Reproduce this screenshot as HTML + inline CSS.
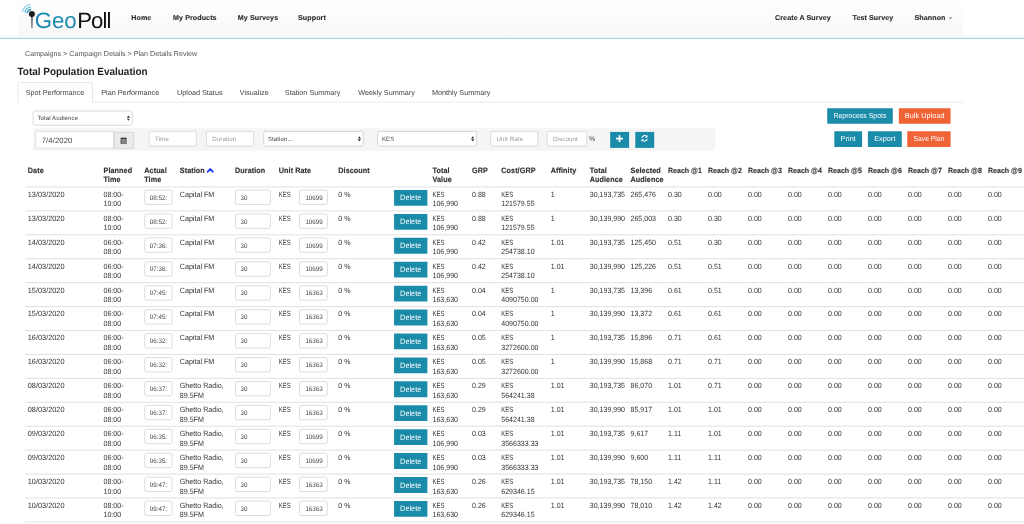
<!DOCTYPE html>
<html><head><meta charset="utf-8"><title>GeoPoll - Total Population Evaluation</title><style>
html,body{margin:0;padding:0;background:#fff;}
body{width:1024px;height:524px;overflow:hidden;position:relative;font-family:"Liberation Sans",sans-serif;}
#w{position:absolute;left:0;top:0;width:1024px;height:524px;will-change:transform;}
#bg{position:absolute;left:0;top:0;width:1024px;height:524px;font-family:"Liberation Sans",sans-serif;}
#bg text{text-rendering:geometricPrecision;white-space:pre;}
</style></head><body><div id="w">
<svg id="bg" width="1024" height="524" viewBox="0 0 1024 524">
<defs><linearGradient id="ng" x1="0" y1="0" x2="0" y2="1"><stop offset="0" stop-color="#ffffff"/><stop offset="1" stop-color="#f7f7f7"/></linearGradient></defs>
<rect x="18.00" y="0.00" width="945.25" height="37.50" fill="url(#ng)"/>
<rect x="0.00" y="37.80" width="1024.00" height="0.90" fill="#8ac5d5"/>
<path d="M27.09 13.12 A4.9 4.9 0 0 1 31.22 9.20" fill="none" stroke="#3a9fc1" stroke-width="1.5"/>
<path d="M24.73 12.66 A7.3 7.3 0 0 1 30.88 6.82" fill="none" stroke="#6fbdd9" stroke-width="1.35"/>
<path d="M22.28 12.18 A9.8 9.8 0 0 1 30.54 4.35" fill="none" stroke="#9bd3e9" stroke-width="1.2"/>
<defs><linearGradient id="st" x1="0" y1="0" x2="0" y2="1"><stop offset="0" stop-color="#444"/><stop offset="1" stop-color="#999"/></linearGradient></defs>
<rect x="31.15" y="15" width="1.6" height="13.4" fill="url(#st)"/>
<circle cx="31.9" cy="14.05" r="3.0" fill="#1c1c1c"/>
<text x="34.80" y="28.10" font-size="22.2" fill="#1b8ab0" letter-spacing="-0.1">Geo</text>
<text x="77.20" y="28.10" font-size="22.2" fill="#111" letter-spacing="-0.9">Poll</text>
<text x="131.25" y="20.10" font-size="7.1" fill="#2a2a2a" font-weight="bold" letter-spacing="0.1" stroke="#2a2a2a" stroke-width="0.12">Home</text>
<text x="173.00" y="20.10" font-size="7.1" fill="#2a2a2a" font-weight="bold" letter-spacing="0.1" stroke="#2a2a2a" stroke-width="0.12">My Products</text>
<text x="237.75" y="20.10" font-size="7.1" fill="#2a2a2a" font-weight="bold" letter-spacing="0.1" stroke="#2a2a2a" stroke-width="0.12">My Surveys</text>
<text x="298.00" y="20.10" font-size="7.1" fill="#2a2a2a" font-weight="bold" letter-spacing="0.1" stroke="#2a2a2a" stroke-width="0.12">Support</text>
<text x="775.00" y="20.10" font-size="7.1" fill="#2a2a2a" font-weight="bold" letter-spacing="0.1" stroke="#2a2a2a" stroke-width="0.12">Create A Survey</text>
<text x="852.50" y="20.10" font-size="7.1" fill="#2a2a2a" font-weight="bold" letter-spacing="0.1" stroke="#2a2a2a" stroke-width="0.12">Test Survey</text>
<text x="914.50" y="20.10" font-size="7.1" fill="#2a2a2a" font-weight="bold" letter-spacing="0.1" stroke="#2a2a2a" stroke-width="0.12">Shannon</text>
<path d="M948.8 17.3 h3.4 l-1.7 1.9 z" fill="#888"/>
<text x="25.00" y="56.00" font-size="7.15" fill="#555">Campaigns &gt; Campaign Details &gt; Plan Details Review</text>
<text x="17.50" y="75.00" font-size="9.95" fill="#222" font-weight="bold" transform="translate(0,75.00) scale(1,1.06) translate(0,-75.00)">Total Population Evaluation</text>
<rect x="18.00" y="101.85" width="945.25" height="0.60" fill="#ddd"/>
<rect x="18.30" y="90.00" width="73.90" height="13.00" fill="#fff"/>
<path d="M18 102.4 V84 a1.5 1.5 0 0 1 1.5 -1.5 H91 a1.5 1.5 0 0 1 1.5 1.5 V102.4" fill="none" stroke="#d8d8d8" stroke-width="0.6"/>
<text x="25.75" y="95.00" font-size="7.25" fill="#444">Spot Performance</text>
<text x="101.25" y="95.00" font-size="7.25" fill="#444">Plan Performance</text>
<text x="177.00" y="95.00" font-size="7.25" fill="#444">Upload Status</text>
<text x="239.80" y="95.00" font-size="7.25" fill="#444">Visualize</text>
<text x="284.80" y="95.00" font-size="7.25" fill="#444">Station Summary</text>
<text x="358.20" y="95.00" font-size="7.25" fill="#444">Weekly Summary</text>
<text x="431.90" y="95.00" font-size="7.25" fill="#444">Monthly Summary</text>
<rect x="33.20" y="111.00" width="99.10" height="14.20" fill="#fff" stroke="#c6c6c6" stroke-width="0.68" rx="1.8"/>
<text x="37.40" y="120.28" font-size="6.05" fill="#444" letter-spacing="0.1">Total Audience</text>
<path transform="translate(126.85,115.55)" d="M0 2.2 L1.55 0 L3.1 2.2 Z M0 3.1 L1.55 5.3 L3.1 3.1 Z" fill="#333"/>
<rect x="33.00" y="128.25" width="682.50" height="22.50" fill="#f5f5f5"/>
<path d="M113.7 131.4 H37.5 a1.8 1.8 0 0 0 -1.8 1.8 V146.3 a1.8 1.8 0 0 0 1.8 1.8 H113.7 Z" fill="#fff" stroke="#ccc" stroke-width="0.6"/>
<text x="41.70" y="142.52" font-size="7.7" fill="#444" letter-spacing="0.1">7/4/2020</text>
<rect x="114.20" y="132.20" width="19.60" height="16.40" fill="#eaeaea" stroke="#c8c8c8" stroke-width="0.6" rx="0.6"/>
<g transform="translate(120.15,137.1) scale(0.1015,0.0945)">
<path fill="#333" d="M4 9h60v61H4z M15 0h9v14H15z M44 0h9v14H44z"/>
<path stroke="#eaeaea" stroke-width="4" d="M4 24h60 M4 39h60 M4 54h60 M19 24v46 M34 24v46 M49 24v46"/>
</g>
<rect x="149.20" y="131.40" width="47.10" height="14.70" fill="#fff" stroke="#ccc" stroke-width="0.68" rx="1.8"/>
<text x="155.00" y="140.98" font-size="6.2" fill="#999" letter-spacing="0.1">Time</text>
<rect x="206.40" y="131.40" width="47.20" height="14.70" fill="#fff" stroke="#ccc" stroke-width="0.68" rx="1.8"/>
<text x="212.20" y="140.98" font-size="6.2" fill="#999" letter-spacing="0.1">Duration</text>
<rect x="263.70" y="131.40" width="99.60" height="14.70" fill="#fff" stroke="#c6c6c6" stroke-width="0.68" rx="1.8"/>
<text x="267.90" y="140.93" font-size="6.05" fill="#444" letter-spacing="0.1">Station...</text>
<path transform="translate(357.85,136.20)" d="M0 2.2 L1.55 0 L3.1 2.2 Z M0 3.1 L1.55 5.3 L3.1 3.1 Z" fill="#333"/>
<rect x="377.70" y="131.40" width="98.90" height="14.70" fill="#fff" stroke="#c6c6c6" stroke-width="0.68" rx="1.8"/>
<text x="381.90" y="140.93" font-size="6.05" fill="#444" letter-spacing="0.1">KES</text>
<path transform="translate(471.15,136.20)" d="M0 2.2 L1.55 0 L3.1 2.2 Z M0 3.1 L1.55 5.3 L3.1 3.1 Z" fill="#333"/>
<rect x="490.70" y="131.40" width="47.10" height="14.70" fill="#fff" stroke="#ccc" stroke-width="0.68" rx="1.8"/>
<text x="496.50" y="140.98" font-size="6.2" fill="#999" letter-spacing="0.1">Unit Rate</text>
<rect x="547.20" y="131.40" width="39.60" height="14.70" fill="#fff" stroke="#ccc" stroke-width="0.68" rx="1.8"/>
<text x="553.00" y="140.98" font-size="6.2" fill="#999" letter-spacing="0.1">Discount</text>
<text x="589.00" y="141.10" font-size="6.9" fill="#333">%</text>
<rect x="610.20" y="131.90" width="18.90" height="16.00" fill="#1a8ca9"/>
<path d="M619.5 135.3v6.8M616.0 138.7h7.0" stroke="#fff" stroke-width="1.75"/>
<rect x="635.30" y="131.90" width="18.90" height="16.00" fill="#1a8ca9"/>
<g transform="translate(640.9,134.7) scale(0.111)">
<g fill="none" stroke="#fff" stroke-width="9.5"><path d="M9 29 A25 25 0 0 1 51 15"/><path d="M57 37 A25 25 0 0 1 15 51"/></g>
<path fill="#fff" d="M60 2v24H36z M6 64V40h24z"/></g>
<rect x="827.20" y="108.20" width="65.60" height="15.55" fill="#1a8ca9" rx="0.4"/>
<text x="860.00" y="118.27" font-size="7.3" fill="#fff" text-anchor="middle" textLength="53.1" lengthAdjust="spacingAndGlyphs">Reprocess Spots</text>
<rect x="898.80" y="108.20" width="51.80" height="15.55" fill="#ef6337" rx="0.4"/>
<text x="924.70" y="118.27" font-size="7.3" fill="#fff" letter-spacing="0.05" text-anchor="middle">Bulk Upload</text>
<rect x="834.30" y="131.25" width="27.80" height="15.75" fill="#1a8ca9" rx="0.4"/>
<text x="848.20" y="141.42" font-size="7.3" fill="#fff" letter-spacing="0.05" text-anchor="middle">Print</text>
<rect x="867.90" y="131.25" width="33.90" height="15.75" fill="#1a8ca9" rx="0.4"/>
<text x="884.85" y="141.42" font-size="7.3" fill="#fff" letter-spacing="0.05" text-anchor="middle">Export</text>
<rect x="907.25" y="131.25" width="43.35" height="15.75" fill="#ef6337" rx="0.4"/>
<text x="928.92" y="141.42" font-size="7.3" fill="#fff" text-anchor="middle" textLength="30.6" lengthAdjust="spacingAndGlyphs">Save Plan</text>
<text x="27.75" y="173.00" font-size="7.2" fill="#333" font-weight="bold" letter-spacing="0.1" stroke="#333" stroke-width="0.15" transform="translate(0,173.00) scale(1,1.07) translate(0,-173.00)">Date</text>
<text x="103.50" y="173.00" font-size="7.2" fill="#333" font-weight="bold" letter-spacing="0.1" stroke="#333" stroke-width="0.15" transform="translate(0,173.00) scale(1,1.07) translate(0,-173.00)">Planned</text>
<text x="103.50" y="181.90" font-size="7.2" fill="#333" font-weight="bold" letter-spacing="0.1" stroke="#333" stroke-width="0.15" transform="translate(0,181.90) scale(1,1.07) translate(0,-181.90)">Time</text>
<text x="144.25" y="173.00" font-size="7.2" fill="#333" font-weight="bold" letter-spacing="0.1" stroke="#333" stroke-width="0.15" transform="translate(0,173.00) scale(1,1.07) translate(0,-173.00)">Actual</text>
<text x="144.25" y="181.90" font-size="7.2" fill="#333" font-weight="bold" letter-spacing="0.1" stroke="#333" stroke-width="0.15" transform="translate(0,181.90) scale(1,1.07) translate(0,-181.90)">Time</text>
<text x="179.75" y="173.00" font-size="7.2" fill="#333" font-weight="bold" letter-spacing="0.1" stroke="#333" stroke-width="0.15" transform="translate(0,173.00) scale(1,1.07) translate(0,-173.00)">Station</text>
<text x="235.00" y="173.00" font-size="7.2" fill="#333" font-weight="bold" letter-spacing="0.1" stroke="#333" stroke-width="0.15" transform="translate(0,173.00) scale(1,1.07) translate(0,-173.00)">Duration</text>
<text x="278.75" y="173.00" font-size="7.2" fill="#333" font-weight="bold" letter-spacing="0.1" stroke="#333" stroke-width="0.15" transform="translate(0,173.00) scale(1,1.07) translate(0,-173.00)">Unit Rate</text>
<text x="338.25" y="173.00" font-size="7.2" fill="#333" font-weight="bold" letter-spacing="0.1" stroke="#333" stroke-width="0.15" transform="translate(0,173.00) scale(1,1.07) translate(0,-173.00)">Discount</text>
<text x="432.50" y="173.00" font-size="7.2" fill="#333" font-weight="bold" letter-spacing="0.1" stroke="#333" stroke-width="0.15" transform="translate(0,173.00) scale(1,1.07) translate(0,-173.00)">Total</text>
<text x="432.50" y="181.90" font-size="7.2" fill="#333" font-weight="bold" letter-spacing="0.1" stroke="#333" stroke-width="0.15" transform="translate(0,181.90) scale(1,1.07) translate(0,-181.90)">Value</text>
<text x="472.00" y="173.00" font-size="7.2" fill="#333" font-weight="bold" letter-spacing="0.1" stroke="#333" stroke-width="0.15" transform="translate(0,173.00) scale(1,1.07) translate(0,-173.00)">GRP</text>
<text x="501.25" y="173.00" font-size="7.2" fill="#333" font-weight="bold" letter-spacing="0.1" stroke="#333" stroke-width="0.15" transform="translate(0,173.00) scale(1,1.07) translate(0,-173.00)">Cost/GRP</text>
<text x="550.75" y="173.00" font-size="7.2" fill="#333" font-weight="bold" letter-spacing="0.1" stroke="#333" stroke-width="0.15" transform="translate(0,173.00) scale(1,1.07) translate(0,-173.00)">Affinity</text>
<text x="589.75" y="173.00" font-size="7.2" fill="#333" font-weight="bold" letter-spacing="0.1" stroke="#333" stroke-width="0.15" transform="translate(0,173.00) scale(1,1.07) translate(0,-173.00)">Total</text>
<text x="589.75" y="181.90" font-size="7.2" fill="#333" font-weight="bold" letter-spacing="0.1" stroke="#333" stroke-width="0.15" transform="translate(0,181.90) scale(1,1.07) translate(0,-181.90)">Audience</text>
<text x="630.50" y="173.00" font-size="7.2" fill="#333" font-weight="bold" letter-spacing="0.1" stroke="#333" stroke-width="0.15" transform="translate(0,173.00) scale(1,1.07) translate(0,-173.00)">Selected</text>
<text x="630.50" y="181.90" font-size="7.2" fill="#333" font-weight="bold" letter-spacing="0.1" stroke="#333" stroke-width="0.15" transform="translate(0,181.90) scale(1,1.07) translate(0,-181.90)">Audience</text>
<text x="668.00" y="173.00" font-size="7.05" fill="#333" font-weight="bold" stroke="#333" stroke-width="0.12" transform="translate(0,173.00) scale(1,1.07) translate(0,-173.00)">Reach @1</text>
<text x="708.00" y="173.00" font-size="7.05" fill="#333" font-weight="bold" stroke="#333" stroke-width="0.12" transform="translate(0,173.00) scale(1,1.07) translate(0,-173.00)">Reach @2</text>
<text x="748.00" y="173.00" font-size="7.05" fill="#333" font-weight="bold" stroke="#333" stroke-width="0.12" transform="translate(0,173.00) scale(1,1.07) translate(0,-173.00)">Reach @3</text>
<text x="788.00" y="173.00" font-size="7.05" fill="#333" font-weight="bold" stroke="#333" stroke-width="0.12" transform="translate(0,173.00) scale(1,1.07) translate(0,-173.00)">Reach @4</text>
<text x="828.00" y="173.00" font-size="7.05" fill="#333" font-weight="bold" stroke="#333" stroke-width="0.12" transform="translate(0,173.00) scale(1,1.07) translate(0,-173.00)">Reach @5</text>
<text x="868.00" y="173.00" font-size="7.05" fill="#333" font-weight="bold" stroke="#333" stroke-width="0.12" transform="translate(0,173.00) scale(1,1.07) translate(0,-173.00)">Reach @6</text>
<text x="908.00" y="173.00" font-size="7.05" fill="#333" font-weight="bold" stroke="#333" stroke-width="0.12" transform="translate(0,173.00) scale(1,1.07) translate(0,-173.00)">Reach @7</text>
<text x="948.00" y="173.00" font-size="7.05" fill="#333" font-weight="bold" stroke="#333" stroke-width="0.12" transform="translate(0,173.00) scale(1,1.07) translate(0,-173.00)">Reach @8</text>
<text x="988.00" y="173.00" font-size="7.05" fill="#333" font-weight="bold" stroke="#333" stroke-width="0.12" transform="translate(0,173.00) scale(1,1.07) translate(0,-173.00)">Reach @9</text>
<path transform="translate(206.9,167.7) scale(0.1)" d="M8 40 L33 14 L58 40" fill="none" stroke="#1b38f2" stroke-width="19" stroke-linecap="round" stroke-linejoin="round"/>
<rect x="25.00" y="186.40" width="999.00" height="1.10" fill="#e3e3e3"/>
<rect x="25.00" y="210.32" width="999.00" height="1.10" fill="#e3e3e3"/>
<rect x="25.00" y="234.25" width="999.00" height="1.10" fill="#e3e3e3"/>
<rect x="25.00" y="258.18" width="999.00" height="1.10" fill="#e3e3e3"/>
<rect x="25.00" y="282.10" width="999.00" height="1.10" fill="#e3e3e3"/>
<rect x="25.00" y="306.02" width="999.00" height="1.10" fill="#e3e3e3"/>
<rect x="25.00" y="329.95" width="999.00" height="1.10" fill="#e3e3e3"/>
<rect x="25.00" y="353.87" width="999.00" height="1.10" fill="#e3e3e3"/>
<rect x="25.00" y="377.80" width="999.00" height="1.10" fill="#e3e3e3"/>
<rect x="25.00" y="401.72" width="999.00" height="1.10" fill="#e3e3e3"/>
<rect x="25.00" y="425.65" width="999.00" height="1.10" fill="#e3e3e3"/>
<rect x="25.00" y="449.57" width="999.00" height="1.10" fill="#e3e3e3"/>
<rect x="25.00" y="473.50" width="999.00" height="1.10" fill="#e3e3e3"/>
<rect x="25.00" y="497.43" width="999.00" height="1.10" fill="#e3e3e3"/>
<rect x="25.00" y="521.35" width="999.00" height="1.10" fill="#e3e3e3"/>
<text x="27.75" y="196.80" font-size="7.05" fill="#333" textLength="36.8" lengthAdjust="spacingAndGlyphs" transform="translate(0,196.80) scale(1,1.07) translate(0,-196.80)">13/03/2020</text>
<text x="103.50" y="196.80" font-size="7.05" fill="#333" transform="translate(0,196.80) scale(1,1.07) translate(0,-196.80)">08:00-</text>
<text x="103.50" y="206.40" font-size="7.05" fill="#333" transform="translate(0,206.40) scale(1,1.07) translate(0,-206.40)">10:00</text>
<rect x="144.75" y="190.05" width="27.35" height="14.40" fill="#fff" stroke="#ccc" stroke-width="0.68" rx="1.8"/>
<text x="149.85" y="199.70" font-size="6.2" fill="#444" transform="translate(0,199.70) scale(1,1.07) translate(0,-199.70)">08:52:</text>
<text x="179.75" y="196.80" font-size="7.15" fill="#333" transform="translate(0,196.80) scale(1,1.07) translate(0,-196.80)">Capital FM</text>
<rect x="235.40" y="190.05" width="35.00" height="14.40" fill="#fff" stroke="#ccc" stroke-width="0.68" rx="1.8"/>
<text x="240.60" y="199.70" font-size="6.2" fill="#444" transform="translate(0,199.70) scale(1,1.07) translate(0,-199.70)">30</text>
<text x="278.75" y="196.80" font-size="7.05" fill="#333" textLength="11.9" lengthAdjust="spacingAndGlyphs" transform="translate(0,196.80) scale(1,1.07) translate(0,-196.80)">KES</text>
<rect x="299.40" y="190.05" width="27.90" height="14.40" fill="#fff" stroke="#ccc" stroke-width="0.68" rx="1.8"/>
<text x="305.40" y="199.70" font-size="6.2" fill="#444" transform="translate(0,199.70) scale(1,1.07) translate(0,-199.70)">10699</text>
<text x="338.25" y="196.80" font-size="7.05" fill="#333" transform="translate(0,196.80) scale(1,1.07) translate(0,-196.80)">0 %</text>
<rect x="394.06" y="189.95" width="33.34" height="15.85" fill="#1a8ca9" rx="0.4"/>
<text x="410.73" y="200.45" font-size="7.25" fill="#fff" letter-spacing="0.05" text-anchor="middle" transform="translate(0,200.45) scale(1,1.07) translate(0,-200.45)">Delete</text>
<text x="432.50" y="196.80" font-size="7.05" fill="#333" textLength="11.9" lengthAdjust="spacingAndGlyphs" transform="translate(0,196.80) scale(1,1.07) translate(0,-196.80)">KES</text>
<text x="432.50" y="206.40" font-size="7.05" fill="#333" transform="translate(0,206.40) scale(1,1.07) translate(0,-206.40)">106,990</text>
<text x="472.00" y="196.80" font-size="7.05" fill="#333" transform="translate(0,196.80) scale(1,1.07) translate(0,-196.80)">0.88</text>
<text x="501.25" y="196.80" font-size="7.05" fill="#333" textLength="11.9" lengthAdjust="spacingAndGlyphs" transform="translate(0,196.80) scale(1,1.07) translate(0,-196.80)">KES</text>
<text x="501.25" y="206.40" font-size="7.05" fill="#333" transform="translate(0,206.40) scale(1,1.07) translate(0,-206.40)">121579.55</text>
<text x="550.75" y="196.80" font-size="7.05" fill="#333" transform="translate(0,196.80) scale(1,1.07) translate(0,-196.80)">1</text>
<text x="589.75" y="196.80" font-size="7.05" fill="#333" transform="translate(0,196.80) scale(1,1.07) translate(0,-196.80)">30,193,735</text>
<text x="630.50" y="196.80" font-size="7.05" fill="#333" transform="translate(0,196.80) scale(1,1.07) translate(0,-196.80)">265,476</text>
<text x="668.00" y="196.80" font-size="7.05" fill="#333" transform="translate(0,196.80) scale(1,1.07) translate(0,-196.80)">0.30</text>
<text x="708.00" y="196.80" font-size="7.05" fill="#333" transform="translate(0,196.80) scale(1,1.07) translate(0,-196.80)">0.00</text>
<text x="748.00" y="196.80" font-size="7.05" fill="#333" transform="translate(0,196.80) scale(1,1.07) translate(0,-196.80)">0.00</text>
<text x="788.00" y="196.80" font-size="7.05" fill="#333" transform="translate(0,196.80) scale(1,1.07) translate(0,-196.80)">0.00</text>
<text x="828.00" y="196.80" font-size="7.05" fill="#333" transform="translate(0,196.80) scale(1,1.07) translate(0,-196.80)">0.00</text>
<text x="868.00" y="196.80" font-size="7.05" fill="#333" transform="translate(0,196.80) scale(1,1.07) translate(0,-196.80)">0.00</text>
<text x="908.00" y="196.80" font-size="7.05" fill="#333" transform="translate(0,196.80) scale(1,1.07) translate(0,-196.80)">0.00</text>
<text x="948.00" y="196.80" font-size="7.05" fill="#333" transform="translate(0,196.80) scale(1,1.07) translate(0,-196.80)">0.00</text>
<text x="988.00" y="196.80" font-size="7.05" fill="#333" transform="translate(0,196.80) scale(1,1.07) translate(0,-196.80)">0.00</text>
<text x="27.75" y="220.72" font-size="7.05" fill="#333" textLength="36.8" lengthAdjust="spacingAndGlyphs" transform="translate(0,220.72) scale(1,1.07) translate(0,-220.72)">13/03/2020</text>
<text x="103.50" y="220.72" font-size="7.05" fill="#333" transform="translate(0,220.72) scale(1,1.07) translate(0,-220.72)">08:00-</text>
<text x="103.50" y="230.32" font-size="7.05" fill="#333" transform="translate(0,230.32) scale(1,1.07) translate(0,-230.32)">10:00</text>
<rect x="144.75" y="213.97" width="27.35" height="14.40" fill="#fff" stroke="#ccc" stroke-width="0.68" rx="1.8"/>
<text x="149.85" y="223.62" font-size="6.2" fill="#444" transform="translate(0,223.62) scale(1,1.07) translate(0,-223.62)">08:52:</text>
<text x="179.75" y="220.72" font-size="7.15" fill="#333" transform="translate(0,220.72) scale(1,1.07) translate(0,-220.72)">Capital FM</text>
<rect x="235.40" y="213.97" width="35.00" height="14.40" fill="#fff" stroke="#ccc" stroke-width="0.68" rx="1.8"/>
<text x="240.60" y="223.62" font-size="6.2" fill="#444" transform="translate(0,223.62) scale(1,1.07) translate(0,-223.62)">30</text>
<text x="278.75" y="220.72" font-size="7.05" fill="#333" textLength="11.9" lengthAdjust="spacingAndGlyphs" transform="translate(0,220.72) scale(1,1.07) translate(0,-220.72)">KES</text>
<rect x="299.40" y="213.97" width="27.90" height="14.40" fill="#fff" stroke="#ccc" stroke-width="0.68" rx="1.8"/>
<text x="305.40" y="223.62" font-size="6.2" fill="#444" transform="translate(0,223.62) scale(1,1.07) translate(0,-223.62)">10699</text>
<text x="338.25" y="220.72" font-size="7.05" fill="#333" transform="translate(0,220.72) scale(1,1.07) translate(0,-220.72)">0 %</text>
<rect x="394.06" y="213.88" width="33.34" height="15.85" fill="#1a8ca9" rx="0.4"/>
<text x="410.73" y="224.38" font-size="7.25" fill="#fff" letter-spacing="0.05" text-anchor="middle" transform="translate(0,224.38) scale(1,1.07) translate(0,-224.38)">Delete</text>
<text x="432.50" y="220.72" font-size="7.05" fill="#333" textLength="11.9" lengthAdjust="spacingAndGlyphs" transform="translate(0,220.72) scale(1,1.07) translate(0,-220.72)">KES</text>
<text x="432.50" y="230.32" font-size="7.05" fill="#333" transform="translate(0,230.32) scale(1,1.07) translate(0,-230.32)">106,990</text>
<text x="472.00" y="220.72" font-size="7.05" fill="#333" transform="translate(0,220.72) scale(1,1.07) translate(0,-220.72)">0.88</text>
<text x="501.25" y="220.72" font-size="7.05" fill="#333" textLength="11.9" lengthAdjust="spacingAndGlyphs" transform="translate(0,220.72) scale(1,1.07) translate(0,-220.72)">KES</text>
<text x="501.25" y="230.32" font-size="7.05" fill="#333" transform="translate(0,230.32) scale(1,1.07) translate(0,-230.32)">121579.55</text>
<text x="550.75" y="220.72" font-size="7.05" fill="#333" transform="translate(0,220.72) scale(1,1.07) translate(0,-220.72)">1</text>
<text x="589.75" y="220.72" font-size="7.05" fill="#333" transform="translate(0,220.72) scale(1,1.07) translate(0,-220.72)">30,139,990</text>
<text x="630.50" y="220.72" font-size="7.05" fill="#333" transform="translate(0,220.72) scale(1,1.07) translate(0,-220.72)">265,003</text>
<text x="668.00" y="220.72" font-size="7.05" fill="#333" transform="translate(0,220.72) scale(1,1.07) translate(0,-220.72)">0.30</text>
<text x="708.00" y="220.72" font-size="7.05" fill="#333" transform="translate(0,220.72) scale(1,1.07) translate(0,-220.72)">0.30</text>
<text x="748.00" y="220.72" font-size="7.05" fill="#333" transform="translate(0,220.72) scale(1,1.07) translate(0,-220.72)">0.00</text>
<text x="788.00" y="220.72" font-size="7.05" fill="#333" transform="translate(0,220.72) scale(1,1.07) translate(0,-220.72)">0.00</text>
<text x="828.00" y="220.72" font-size="7.05" fill="#333" transform="translate(0,220.72) scale(1,1.07) translate(0,-220.72)">0.00</text>
<text x="868.00" y="220.72" font-size="7.05" fill="#333" transform="translate(0,220.72) scale(1,1.07) translate(0,-220.72)">0.00</text>
<text x="908.00" y="220.72" font-size="7.05" fill="#333" transform="translate(0,220.72) scale(1,1.07) translate(0,-220.72)">0.00</text>
<text x="948.00" y="220.72" font-size="7.05" fill="#333" transform="translate(0,220.72) scale(1,1.07) translate(0,-220.72)">0.00</text>
<text x="988.00" y="220.72" font-size="7.05" fill="#333" transform="translate(0,220.72) scale(1,1.07) translate(0,-220.72)">0.00</text>
<text x="27.75" y="244.65" font-size="7.05" fill="#333" textLength="36.8" lengthAdjust="spacingAndGlyphs" transform="translate(0,244.65) scale(1,1.07) translate(0,-244.65)">14/03/2020</text>
<text x="103.50" y="244.65" font-size="7.05" fill="#333" transform="translate(0,244.65) scale(1,1.07) translate(0,-244.65)">06:00-</text>
<text x="103.50" y="254.25" font-size="7.05" fill="#333" transform="translate(0,254.25) scale(1,1.07) translate(0,-254.25)">08:00</text>
<rect x="144.75" y="237.90" width="27.35" height="14.40" fill="#fff" stroke="#ccc" stroke-width="0.68" rx="1.8"/>
<text x="149.85" y="247.55" font-size="6.2" fill="#444" transform="translate(0,247.55) scale(1,1.07) translate(0,-247.55)">07:36:</text>
<text x="179.75" y="244.65" font-size="7.15" fill="#333" transform="translate(0,244.65) scale(1,1.07) translate(0,-244.65)">Capital FM</text>
<rect x="235.40" y="237.90" width="35.00" height="14.40" fill="#fff" stroke="#ccc" stroke-width="0.68" rx="1.8"/>
<text x="240.60" y="247.55" font-size="6.2" fill="#444" transform="translate(0,247.55) scale(1,1.07) translate(0,-247.55)">30</text>
<text x="278.75" y="244.65" font-size="7.05" fill="#333" textLength="11.9" lengthAdjust="spacingAndGlyphs" transform="translate(0,244.65) scale(1,1.07) translate(0,-244.65)">KES</text>
<rect x="299.40" y="237.90" width="27.90" height="14.40" fill="#fff" stroke="#ccc" stroke-width="0.68" rx="1.8"/>
<text x="305.40" y="247.55" font-size="6.2" fill="#444" transform="translate(0,247.55) scale(1,1.07) translate(0,-247.55)">10699</text>
<text x="338.25" y="244.65" font-size="7.05" fill="#333" transform="translate(0,244.65) scale(1,1.07) translate(0,-244.65)">0 %</text>
<rect x="394.06" y="237.80" width="33.34" height="15.85" fill="#1a8ca9" rx="0.4"/>
<text x="410.73" y="248.30" font-size="7.25" fill="#fff" letter-spacing="0.05" text-anchor="middle" transform="translate(0,248.30) scale(1,1.07) translate(0,-248.30)">Delete</text>
<text x="432.50" y="244.65" font-size="7.05" fill="#333" textLength="11.9" lengthAdjust="spacingAndGlyphs" transform="translate(0,244.65) scale(1,1.07) translate(0,-244.65)">KES</text>
<text x="432.50" y="254.25" font-size="7.05" fill="#333" transform="translate(0,254.25) scale(1,1.07) translate(0,-254.25)">106,990</text>
<text x="472.00" y="244.65" font-size="7.05" fill="#333" transform="translate(0,244.65) scale(1,1.07) translate(0,-244.65)">0.42</text>
<text x="501.25" y="244.65" font-size="7.05" fill="#333" textLength="11.9" lengthAdjust="spacingAndGlyphs" transform="translate(0,244.65) scale(1,1.07) translate(0,-244.65)">KES</text>
<text x="501.25" y="254.25" font-size="7.05" fill="#333" transform="translate(0,254.25) scale(1,1.07) translate(0,-254.25)">254738.10</text>
<text x="550.75" y="244.65" font-size="7.05" fill="#333" transform="translate(0,244.65) scale(1,1.07) translate(0,-244.65)">1.01</text>
<text x="589.75" y="244.65" font-size="7.05" fill="#333" transform="translate(0,244.65) scale(1,1.07) translate(0,-244.65)">30,193,735</text>
<text x="630.50" y="244.65" font-size="7.05" fill="#333" transform="translate(0,244.65) scale(1,1.07) translate(0,-244.65)">125,450</text>
<text x="668.00" y="244.65" font-size="7.05" fill="#333" transform="translate(0,244.65) scale(1,1.07) translate(0,-244.65)">0.51</text>
<text x="708.00" y="244.65" font-size="7.05" fill="#333" transform="translate(0,244.65) scale(1,1.07) translate(0,-244.65)">0.30</text>
<text x="748.00" y="244.65" font-size="7.05" fill="#333" transform="translate(0,244.65) scale(1,1.07) translate(0,-244.65)">0.00</text>
<text x="788.00" y="244.65" font-size="7.05" fill="#333" transform="translate(0,244.65) scale(1,1.07) translate(0,-244.65)">0.00</text>
<text x="828.00" y="244.65" font-size="7.05" fill="#333" transform="translate(0,244.65) scale(1,1.07) translate(0,-244.65)">0.00</text>
<text x="868.00" y="244.65" font-size="7.05" fill="#333" transform="translate(0,244.65) scale(1,1.07) translate(0,-244.65)">0.00</text>
<text x="908.00" y="244.65" font-size="7.05" fill="#333" transform="translate(0,244.65) scale(1,1.07) translate(0,-244.65)">0.00</text>
<text x="948.00" y="244.65" font-size="7.05" fill="#333" transform="translate(0,244.65) scale(1,1.07) translate(0,-244.65)">0.00</text>
<text x="988.00" y="244.65" font-size="7.05" fill="#333" transform="translate(0,244.65) scale(1,1.07) translate(0,-244.65)">0.00</text>
<text x="27.75" y="268.58" font-size="7.05" fill="#333" textLength="36.8" lengthAdjust="spacingAndGlyphs" transform="translate(0,268.58) scale(1,1.07) translate(0,-268.58)">14/03/2020</text>
<text x="103.50" y="268.58" font-size="7.05" fill="#333" transform="translate(0,268.58) scale(1,1.07) translate(0,-268.58)">06:00-</text>
<text x="103.50" y="278.18" font-size="7.05" fill="#333" transform="translate(0,278.18) scale(1,1.07) translate(0,-278.18)">08:00</text>
<rect x="144.75" y="261.83" width="27.35" height="14.40" fill="#fff" stroke="#ccc" stroke-width="0.68" rx="1.8"/>
<text x="149.85" y="271.48" font-size="6.2" fill="#444" transform="translate(0,271.48) scale(1,1.07) translate(0,-271.48)">07:36:</text>
<text x="179.75" y="268.58" font-size="7.15" fill="#333" transform="translate(0,268.58) scale(1,1.07) translate(0,-268.58)">Capital FM</text>
<rect x="235.40" y="261.83" width="35.00" height="14.40" fill="#fff" stroke="#ccc" stroke-width="0.68" rx="1.8"/>
<text x="240.60" y="271.48" font-size="6.2" fill="#444" transform="translate(0,271.48) scale(1,1.07) translate(0,-271.48)">30</text>
<text x="278.75" y="268.58" font-size="7.05" fill="#333" textLength="11.9" lengthAdjust="spacingAndGlyphs" transform="translate(0,268.58) scale(1,1.07) translate(0,-268.58)">KES</text>
<rect x="299.40" y="261.83" width="27.90" height="14.40" fill="#fff" stroke="#ccc" stroke-width="0.68" rx="1.8"/>
<text x="305.40" y="271.48" font-size="6.2" fill="#444" transform="translate(0,271.48) scale(1,1.07) translate(0,-271.48)">10699</text>
<text x="338.25" y="268.58" font-size="7.05" fill="#333" transform="translate(0,268.58) scale(1,1.07) translate(0,-268.58)">0 %</text>
<rect x="394.06" y="261.73" width="33.34" height="15.85" fill="#1a8ca9" rx="0.4"/>
<text x="410.73" y="272.23" font-size="7.25" fill="#fff" letter-spacing="0.05" text-anchor="middle" transform="translate(0,272.23) scale(1,1.07) translate(0,-272.23)">Delete</text>
<text x="432.50" y="268.58" font-size="7.05" fill="#333" textLength="11.9" lengthAdjust="spacingAndGlyphs" transform="translate(0,268.58) scale(1,1.07) translate(0,-268.58)">KES</text>
<text x="432.50" y="278.18" font-size="7.05" fill="#333" transform="translate(0,278.18) scale(1,1.07) translate(0,-278.18)">106,990</text>
<text x="472.00" y="268.58" font-size="7.05" fill="#333" transform="translate(0,268.58) scale(1,1.07) translate(0,-268.58)">0.42</text>
<text x="501.25" y="268.58" font-size="7.05" fill="#333" textLength="11.9" lengthAdjust="spacingAndGlyphs" transform="translate(0,268.58) scale(1,1.07) translate(0,-268.58)">KES</text>
<text x="501.25" y="278.18" font-size="7.05" fill="#333" transform="translate(0,278.18) scale(1,1.07) translate(0,-278.18)">254738.10</text>
<text x="550.75" y="268.58" font-size="7.05" fill="#333" transform="translate(0,268.58) scale(1,1.07) translate(0,-268.58)">1.01</text>
<text x="589.75" y="268.58" font-size="7.05" fill="#333" transform="translate(0,268.58) scale(1,1.07) translate(0,-268.58)">30,139,990</text>
<text x="630.50" y="268.58" font-size="7.05" fill="#333" transform="translate(0,268.58) scale(1,1.07) translate(0,-268.58)">125,226</text>
<text x="668.00" y="268.58" font-size="7.05" fill="#333" transform="translate(0,268.58) scale(1,1.07) translate(0,-268.58)">0.51</text>
<text x="708.00" y="268.58" font-size="7.05" fill="#333" transform="translate(0,268.58) scale(1,1.07) translate(0,-268.58)">0.51</text>
<text x="748.00" y="268.58" font-size="7.05" fill="#333" transform="translate(0,268.58) scale(1,1.07) translate(0,-268.58)">0.00</text>
<text x="788.00" y="268.58" font-size="7.05" fill="#333" transform="translate(0,268.58) scale(1,1.07) translate(0,-268.58)">0.00</text>
<text x="828.00" y="268.58" font-size="7.05" fill="#333" transform="translate(0,268.58) scale(1,1.07) translate(0,-268.58)">0.00</text>
<text x="868.00" y="268.58" font-size="7.05" fill="#333" transform="translate(0,268.58) scale(1,1.07) translate(0,-268.58)">0.00</text>
<text x="908.00" y="268.58" font-size="7.05" fill="#333" transform="translate(0,268.58) scale(1,1.07) translate(0,-268.58)">0.00</text>
<text x="948.00" y="268.58" font-size="7.05" fill="#333" transform="translate(0,268.58) scale(1,1.07) translate(0,-268.58)">0.00</text>
<text x="988.00" y="268.58" font-size="7.05" fill="#333" transform="translate(0,268.58) scale(1,1.07) translate(0,-268.58)">0.00</text>
<text x="27.75" y="292.50" font-size="7.05" fill="#333" textLength="36.8" lengthAdjust="spacingAndGlyphs" transform="translate(0,292.50) scale(1,1.07) translate(0,-292.50)">15/03/2020</text>
<text x="103.50" y="292.50" font-size="7.05" fill="#333" transform="translate(0,292.50) scale(1,1.07) translate(0,-292.50)">06:00-</text>
<text x="103.50" y="302.10" font-size="7.05" fill="#333" transform="translate(0,302.10) scale(1,1.07) translate(0,-302.10)">08:00</text>
<rect x="144.75" y="285.75" width="27.35" height="14.40" fill="#fff" stroke="#ccc" stroke-width="0.68" rx="1.8"/>
<text x="149.85" y="295.40" font-size="6.2" fill="#444" transform="translate(0,295.40) scale(1,1.07) translate(0,-295.40)">07:45:</text>
<text x="179.75" y="292.50" font-size="7.15" fill="#333" transform="translate(0,292.50) scale(1,1.07) translate(0,-292.50)">Capital FM</text>
<rect x="235.40" y="285.75" width="35.00" height="14.40" fill="#fff" stroke="#ccc" stroke-width="0.68" rx="1.8"/>
<text x="240.60" y="295.40" font-size="6.2" fill="#444" transform="translate(0,295.40) scale(1,1.07) translate(0,-295.40)">30</text>
<text x="278.75" y="292.50" font-size="7.05" fill="#333" textLength="11.9" lengthAdjust="spacingAndGlyphs" transform="translate(0,292.50) scale(1,1.07) translate(0,-292.50)">KES</text>
<rect x="299.40" y="285.75" width="27.90" height="14.40" fill="#fff" stroke="#ccc" stroke-width="0.68" rx="1.8"/>
<text x="305.40" y="295.40" font-size="6.2" fill="#444" transform="translate(0,295.40) scale(1,1.07) translate(0,-295.40)">16363</text>
<text x="338.25" y="292.50" font-size="7.05" fill="#333" transform="translate(0,292.50) scale(1,1.07) translate(0,-292.50)">0 %</text>
<rect x="394.06" y="285.65" width="33.34" height="15.85" fill="#1a8ca9" rx="0.4"/>
<text x="410.73" y="296.15" font-size="7.25" fill="#fff" letter-spacing="0.05" text-anchor="middle" transform="translate(0,296.15) scale(1,1.07) translate(0,-296.15)">Delete</text>
<text x="432.50" y="292.50" font-size="7.05" fill="#333" textLength="11.9" lengthAdjust="spacingAndGlyphs" transform="translate(0,292.50) scale(1,1.07) translate(0,-292.50)">KES</text>
<text x="432.50" y="302.10" font-size="7.05" fill="#333" transform="translate(0,302.10) scale(1,1.07) translate(0,-302.10)">163,630</text>
<text x="472.00" y="292.50" font-size="7.05" fill="#333" transform="translate(0,292.50) scale(1,1.07) translate(0,-292.50)">0.04</text>
<text x="501.25" y="292.50" font-size="7.05" fill="#333" textLength="11.9" lengthAdjust="spacingAndGlyphs" transform="translate(0,292.50) scale(1,1.07) translate(0,-292.50)">KES</text>
<text x="501.25" y="302.10" font-size="7.05" fill="#333" transform="translate(0,302.10) scale(1,1.07) translate(0,-302.10)">4090750.00</text>
<text x="550.75" y="292.50" font-size="7.05" fill="#333" transform="translate(0,292.50) scale(1,1.07) translate(0,-292.50)">1</text>
<text x="589.75" y="292.50" font-size="7.05" fill="#333" transform="translate(0,292.50) scale(1,1.07) translate(0,-292.50)">30,193,735</text>
<text x="630.50" y="292.50" font-size="7.05" fill="#333" transform="translate(0,292.50) scale(1,1.07) translate(0,-292.50)">13,396</text>
<text x="668.00" y="292.50" font-size="7.05" fill="#333" transform="translate(0,292.50) scale(1,1.07) translate(0,-292.50)">0.61</text>
<text x="708.00" y="292.50" font-size="7.05" fill="#333" transform="translate(0,292.50) scale(1,1.07) translate(0,-292.50)">0.51</text>
<text x="748.00" y="292.50" font-size="7.05" fill="#333" transform="translate(0,292.50) scale(1,1.07) translate(0,-292.50)">0.00</text>
<text x="788.00" y="292.50" font-size="7.05" fill="#333" transform="translate(0,292.50) scale(1,1.07) translate(0,-292.50)">0.00</text>
<text x="828.00" y="292.50" font-size="7.05" fill="#333" transform="translate(0,292.50) scale(1,1.07) translate(0,-292.50)">0.00</text>
<text x="868.00" y="292.50" font-size="7.05" fill="#333" transform="translate(0,292.50) scale(1,1.07) translate(0,-292.50)">0.00</text>
<text x="908.00" y="292.50" font-size="7.05" fill="#333" transform="translate(0,292.50) scale(1,1.07) translate(0,-292.50)">0.00</text>
<text x="948.00" y="292.50" font-size="7.05" fill="#333" transform="translate(0,292.50) scale(1,1.07) translate(0,-292.50)">0.00</text>
<text x="988.00" y="292.50" font-size="7.05" fill="#333" transform="translate(0,292.50) scale(1,1.07) translate(0,-292.50)">0.00</text>
<text x="27.75" y="316.43" font-size="7.05" fill="#333" textLength="36.8" lengthAdjust="spacingAndGlyphs" transform="translate(0,316.43) scale(1,1.07) translate(0,-316.43)">15/03/2020</text>
<text x="103.50" y="316.43" font-size="7.05" fill="#333" transform="translate(0,316.43) scale(1,1.07) translate(0,-316.43)">06:00-</text>
<text x="103.50" y="326.02" font-size="7.05" fill="#333" transform="translate(0,326.02) scale(1,1.07) translate(0,-326.02)">08:00</text>
<rect x="144.75" y="309.68" width="27.35" height="14.40" fill="#fff" stroke="#ccc" stroke-width="0.68" rx="1.8"/>
<text x="149.85" y="319.32" font-size="6.2" fill="#444" transform="translate(0,319.32) scale(1,1.07) translate(0,-319.32)">07:45:</text>
<text x="179.75" y="316.43" font-size="7.15" fill="#333" transform="translate(0,316.43) scale(1,1.07) translate(0,-316.43)">Capital FM</text>
<rect x="235.40" y="309.68" width="35.00" height="14.40" fill="#fff" stroke="#ccc" stroke-width="0.68" rx="1.8"/>
<text x="240.60" y="319.32" font-size="6.2" fill="#444" transform="translate(0,319.32) scale(1,1.07) translate(0,-319.32)">30</text>
<text x="278.75" y="316.43" font-size="7.05" fill="#333" textLength="11.9" lengthAdjust="spacingAndGlyphs" transform="translate(0,316.43) scale(1,1.07) translate(0,-316.43)">KES</text>
<rect x="299.40" y="309.68" width="27.90" height="14.40" fill="#fff" stroke="#ccc" stroke-width="0.68" rx="1.8"/>
<text x="305.40" y="319.32" font-size="6.2" fill="#444" transform="translate(0,319.32) scale(1,1.07) translate(0,-319.32)">16363</text>
<text x="338.25" y="316.43" font-size="7.05" fill="#333" transform="translate(0,316.43) scale(1,1.07) translate(0,-316.43)">0 %</text>
<rect x="394.06" y="309.57" width="33.34" height="15.85" fill="#1a8ca9" rx="0.4"/>
<text x="410.73" y="320.07" font-size="7.25" fill="#fff" letter-spacing="0.05" text-anchor="middle" transform="translate(0,320.07) scale(1,1.07) translate(0,-320.07)">Delete</text>
<text x="432.50" y="316.43" font-size="7.05" fill="#333" textLength="11.9" lengthAdjust="spacingAndGlyphs" transform="translate(0,316.43) scale(1,1.07) translate(0,-316.43)">KES</text>
<text x="432.50" y="326.02" font-size="7.05" fill="#333" transform="translate(0,326.02) scale(1,1.07) translate(0,-326.02)">163,630</text>
<text x="472.00" y="316.43" font-size="7.05" fill="#333" transform="translate(0,316.43) scale(1,1.07) translate(0,-316.43)">0.04</text>
<text x="501.25" y="316.43" font-size="7.05" fill="#333" textLength="11.9" lengthAdjust="spacingAndGlyphs" transform="translate(0,316.43) scale(1,1.07) translate(0,-316.43)">KES</text>
<text x="501.25" y="326.02" font-size="7.05" fill="#333" transform="translate(0,326.02) scale(1,1.07) translate(0,-326.02)">4090750.00</text>
<text x="550.75" y="316.43" font-size="7.05" fill="#333" transform="translate(0,316.43) scale(1,1.07) translate(0,-316.43)">1</text>
<text x="589.75" y="316.43" font-size="7.05" fill="#333" transform="translate(0,316.43) scale(1,1.07) translate(0,-316.43)">30,139,990</text>
<text x="630.50" y="316.43" font-size="7.05" fill="#333" transform="translate(0,316.43) scale(1,1.07) translate(0,-316.43)">13,372</text>
<text x="668.00" y="316.43" font-size="7.05" fill="#333" transform="translate(0,316.43) scale(1,1.07) translate(0,-316.43)">0.61</text>
<text x="708.00" y="316.43" font-size="7.05" fill="#333" transform="translate(0,316.43) scale(1,1.07) translate(0,-316.43)">0.61</text>
<text x="748.00" y="316.43" font-size="7.05" fill="#333" transform="translate(0,316.43) scale(1,1.07) translate(0,-316.43)">0.00</text>
<text x="788.00" y="316.43" font-size="7.05" fill="#333" transform="translate(0,316.43) scale(1,1.07) translate(0,-316.43)">0.00</text>
<text x="828.00" y="316.43" font-size="7.05" fill="#333" transform="translate(0,316.43) scale(1,1.07) translate(0,-316.43)">0.00</text>
<text x="868.00" y="316.43" font-size="7.05" fill="#333" transform="translate(0,316.43) scale(1,1.07) translate(0,-316.43)">0.00</text>
<text x="908.00" y="316.43" font-size="7.05" fill="#333" transform="translate(0,316.43) scale(1,1.07) translate(0,-316.43)">0.00</text>
<text x="948.00" y="316.43" font-size="7.05" fill="#333" transform="translate(0,316.43) scale(1,1.07) translate(0,-316.43)">0.00</text>
<text x="988.00" y="316.43" font-size="7.05" fill="#333" transform="translate(0,316.43) scale(1,1.07) translate(0,-316.43)">0.00</text>
<text x="27.75" y="340.35" font-size="7.05" fill="#333" textLength="36.8" lengthAdjust="spacingAndGlyphs" transform="translate(0,340.35) scale(1,1.07) translate(0,-340.35)">16/03/2020</text>
<text x="103.50" y="340.35" font-size="7.05" fill="#333" transform="translate(0,340.35) scale(1,1.07) translate(0,-340.35)">06:00-</text>
<text x="103.50" y="349.95" font-size="7.05" fill="#333" transform="translate(0,349.95) scale(1,1.07) translate(0,-349.95)">08:00</text>
<rect x="144.75" y="333.60" width="27.35" height="14.40" fill="#fff" stroke="#ccc" stroke-width="0.68" rx="1.8"/>
<text x="149.85" y="343.25" font-size="6.2" fill="#444" transform="translate(0,343.25) scale(1,1.07) translate(0,-343.25)">06:32:</text>
<text x="179.75" y="340.35" font-size="7.15" fill="#333" transform="translate(0,340.35) scale(1,1.07) translate(0,-340.35)">Capital FM</text>
<rect x="235.40" y="333.60" width="35.00" height="14.40" fill="#fff" stroke="#ccc" stroke-width="0.68" rx="1.8"/>
<text x="240.60" y="343.25" font-size="6.2" fill="#444" transform="translate(0,343.25) scale(1,1.07) translate(0,-343.25)">30</text>
<text x="278.75" y="340.35" font-size="7.05" fill="#333" textLength="11.9" lengthAdjust="spacingAndGlyphs" transform="translate(0,340.35) scale(1,1.07) translate(0,-340.35)">KES</text>
<rect x="299.40" y="333.60" width="27.90" height="14.40" fill="#fff" stroke="#ccc" stroke-width="0.68" rx="1.8"/>
<text x="305.40" y="343.25" font-size="6.2" fill="#444" transform="translate(0,343.25) scale(1,1.07) translate(0,-343.25)">16363</text>
<text x="338.25" y="340.35" font-size="7.05" fill="#333" transform="translate(0,340.35) scale(1,1.07) translate(0,-340.35)">0 %</text>
<rect x="394.06" y="333.50" width="33.34" height="15.85" fill="#1a8ca9" rx="0.4"/>
<text x="410.73" y="344.00" font-size="7.25" fill="#fff" letter-spacing="0.05" text-anchor="middle" transform="translate(0,344.00) scale(1,1.07) translate(0,-344.00)">Delete</text>
<text x="432.50" y="340.35" font-size="7.05" fill="#333" textLength="11.9" lengthAdjust="spacingAndGlyphs" transform="translate(0,340.35) scale(1,1.07) translate(0,-340.35)">KES</text>
<text x="432.50" y="349.95" font-size="7.05" fill="#333" transform="translate(0,349.95) scale(1,1.07) translate(0,-349.95)">163,630</text>
<text x="472.00" y="340.35" font-size="7.05" fill="#333" transform="translate(0,340.35) scale(1,1.07) translate(0,-340.35)">0.05</text>
<text x="501.25" y="340.35" font-size="7.05" fill="#333" textLength="11.9" lengthAdjust="spacingAndGlyphs" transform="translate(0,340.35) scale(1,1.07) translate(0,-340.35)">KES</text>
<text x="501.25" y="349.95" font-size="7.05" fill="#333" transform="translate(0,349.95) scale(1,1.07) translate(0,-349.95)">3272600.00</text>
<text x="550.75" y="340.35" font-size="7.05" fill="#333" transform="translate(0,340.35) scale(1,1.07) translate(0,-340.35)">1</text>
<text x="589.75" y="340.35" font-size="7.05" fill="#333" transform="translate(0,340.35) scale(1,1.07) translate(0,-340.35)">30,193,735</text>
<text x="630.50" y="340.35" font-size="7.05" fill="#333" transform="translate(0,340.35) scale(1,1.07) translate(0,-340.35)">15,896</text>
<text x="668.00" y="340.35" font-size="7.05" fill="#333" transform="translate(0,340.35) scale(1,1.07) translate(0,-340.35)">0.71</text>
<text x="708.00" y="340.35" font-size="7.05" fill="#333" transform="translate(0,340.35) scale(1,1.07) translate(0,-340.35)">0.61</text>
<text x="748.00" y="340.35" font-size="7.05" fill="#333" transform="translate(0,340.35) scale(1,1.07) translate(0,-340.35)">0.00</text>
<text x="788.00" y="340.35" font-size="7.05" fill="#333" transform="translate(0,340.35) scale(1,1.07) translate(0,-340.35)">0.00</text>
<text x="828.00" y="340.35" font-size="7.05" fill="#333" transform="translate(0,340.35) scale(1,1.07) translate(0,-340.35)">0.00</text>
<text x="868.00" y="340.35" font-size="7.05" fill="#333" transform="translate(0,340.35) scale(1,1.07) translate(0,-340.35)">0.00</text>
<text x="908.00" y="340.35" font-size="7.05" fill="#333" transform="translate(0,340.35) scale(1,1.07) translate(0,-340.35)">0.00</text>
<text x="948.00" y="340.35" font-size="7.05" fill="#333" transform="translate(0,340.35) scale(1,1.07) translate(0,-340.35)">0.00</text>
<text x="988.00" y="340.35" font-size="7.05" fill="#333" transform="translate(0,340.35) scale(1,1.07) translate(0,-340.35)">0.00</text>
<text x="27.75" y="364.27" font-size="7.05" fill="#333" textLength="36.8" lengthAdjust="spacingAndGlyphs" transform="translate(0,364.27) scale(1,1.07) translate(0,-364.27)">16/03/2020</text>
<text x="103.50" y="364.27" font-size="7.05" fill="#333" transform="translate(0,364.27) scale(1,1.07) translate(0,-364.27)">06:00-</text>
<text x="103.50" y="373.87" font-size="7.05" fill="#333" transform="translate(0,373.87) scale(1,1.07) translate(0,-373.87)">08:00</text>
<rect x="144.75" y="357.52" width="27.35" height="14.40" fill="#fff" stroke="#ccc" stroke-width="0.68" rx="1.8"/>
<text x="149.85" y="367.17" font-size="6.2" fill="#444" transform="translate(0,367.17) scale(1,1.07) translate(0,-367.17)">06:32:</text>
<text x="179.75" y="364.27" font-size="7.15" fill="#333" transform="translate(0,364.27) scale(1,1.07) translate(0,-364.27)">Capital FM</text>
<rect x="235.40" y="357.52" width="35.00" height="14.40" fill="#fff" stroke="#ccc" stroke-width="0.68" rx="1.8"/>
<text x="240.60" y="367.17" font-size="6.2" fill="#444" transform="translate(0,367.17) scale(1,1.07) translate(0,-367.17)">30</text>
<text x="278.75" y="364.27" font-size="7.05" fill="#333" textLength="11.9" lengthAdjust="spacingAndGlyphs" transform="translate(0,364.27) scale(1,1.07) translate(0,-364.27)">KES</text>
<rect x="299.40" y="357.52" width="27.90" height="14.40" fill="#fff" stroke="#ccc" stroke-width="0.68" rx="1.8"/>
<text x="305.40" y="367.17" font-size="6.2" fill="#444" transform="translate(0,367.17) scale(1,1.07) translate(0,-367.17)">16363</text>
<text x="338.25" y="364.27" font-size="7.05" fill="#333" transform="translate(0,364.27) scale(1,1.07) translate(0,-364.27)">0 %</text>
<rect x="394.06" y="357.42" width="33.34" height="15.85" fill="#1a8ca9" rx="0.4"/>
<text x="410.73" y="367.92" font-size="7.25" fill="#fff" letter-spacing="0.05" text-anchor="middle" transform="translate(0,367.92) scale(1,1.07) translate(0,-367.92)">Delete</text>
<text x="432.50" y="364.27" font-size="7.05" fill="#333" textLength="11.9" lengthAdjust="spacingAndGlyphs" transform="translate(0,364.27) scale(1,1.07) translate(0,-364.27)">KES</text>
<text x="432.50" y="373.87" font-size="7.05" fill="#333" transform="translate(0,373.87) scale(1,1.07) translate(0,-373.87)">163,630</text>
<text x="472.00" y="364.27" font-size="7.05" fill="#333" transform="translate(0,364.27) scale(1,1.07) translate(0,-364.27)">0.05</text>
<text x="501.25" y="364.27" font-size="7.05" fill="#333" textLength="11.9" lengthAdjust="spacingAndGlyphs" transform="translate(0,364.27) scale(1,1.07) translate(0,-364.27)">KES</text>
<text x="501.25" y="373.87" font-size="7.05" fill="#333" transform="translate(0,373.87) scale(1,1.07) translate(0,-373.87)">3272600.00</text>
<text x="550.75" y="364.27" font-size="7.05" fill="#333" transform="translate(0,364.27) scale(1,1.07) translate(0,-364.27)">1</text>
<text x="589.75" y="364.27" font-size="7.05" fill="#333" transform="translate(0,364.27) scale(1,1.07) translate(0,-364.27)">30,139,990</text>
<text x="630.50" y="364.27" font-size="7.05" fill="#333" transform="translate(0,364.27) scale(1,1.07) translate(0,-364.27)">15,868</text>
<text x="668.00" y="364.27" font-size="7.05" fill="#333" transform="translate(0,364.27) scale(1,1.07) translate(0,-364.27)">0.71</text>
<text x="708.00" y="364.27" font-size="7.05" fill="#333" transform="translate(0,364.27) scale(1,1.07) translate(0,-364.27)">0.71</text>
<text x="748.00" y="364.27" font-size="7.05" fill="#333" transform="translate(0,364.27) scale(1,1.07) translate(0,-364.27)">0.00</text>
<text x="788.00" y="364.27" font-size="7.05" fill="#333" transform="translate(0,364.27) scale(1,1.07) translate(0,-364.27)">0.00</text>
<text x="828.00" y="364.27" font-size="7.05" fill="#333" transform="translate(0,364.27) scale(1,1.07) translate(0,-364.27)">0.00</text>
<text x="868.00" y="364.27" font-size="7.05" fill="#333" transform="translate(0,364.27) scale(1,1.07) translate(0,-364.27)">0.00</text>
<text x="908.00" y="364.27" font-size="7.05" fill="#333" transform="translate(0,364.27) scale(1,1.07) translate(0,-364.27)">0.00</text>
<text x="948.00" y="364.27" font-size="7.05" fill="#333" transform="translate(0,364.27) scale(1,1.07) translate(0,-364.27)">0.00</text>
<text x="988.00" y="364.27" font-size="7.05" fill="#333" transform="translate(0,364.27) scale(1,1.07) translate(0,-364.27)">0.00</text>
<text x="27.75" y="388.20" font-size="7.05" fill="#333" textLength="36.8" lengthAdjust="spacingAndGlyphs" transform="translate(0,388.20) scale(1,1.07) translate(0,-388.20)">08/03/2020</text>
<text x="103.50" y="388.20" font-size="7.05" fill="#333" transform="translate(0,388.20) scale(1,1.07) translate(0,-388.20)">06:00-</text>
<text x="103.50" y="397.80" font-size="7.05" fill="#333" transform="translate(0,397.80) scale(1,1.07) translate(0,-397.80)">08:00</text>
<rect x="144.75" y="381.45" width="27.35" height="14.40" fill="#fff" stroke="#ccc" stroke-width="0.68" rx="1.8"/>
<text x="149.85" y="391.10" font-size="6.2" fill="#444" transform="translate(0,391.10) scale(1,1.07) translate(0,-391.10)">06:37:</text>
<text x="179.75" y="388.20" font-size="7.15" fill="#333" transform="translate(0,388.20) scale(1,1.07) translate(0,-388.20)">Ghetto Radio,</text>
<text x="179.75" y="397.80" font-size="7.15" fill="#333" transform="translate(0,397.80) scale(1,1.07) translate(0,-397.80)">89.5FM</text>
<rect x="235.40" y="381.45" width="35.00" height="14.40" fill="#fff" stroke="#ccc" stroke-width="0.68" rx="1.8"/>
<text x="240.60" y="391.10" font-size="6.2" fill="#444" transform="translate(0,391.10) scale(1,1.07) translate(0,-391.10)">30</text>
<text x="278.75" y="388.20" font-size="7.05" fill="#333" textLength="11.9" lengthAdjust="spacingAndGlyphs" transform="translate(0,388.20) scale(1,1.07) translate(0,-388.20)">KES</text>
<rect x="299.40" y="381.45" width="27.90" height="14.40" fill="#fff" stroke="#ccc" stroke-width="0.68" rx="1.8"/>
<text x="305.40" y="391.10" font-size="6.2" fill="#444" transform="translate(0,391.10) scale(1,1.07) translate(0,-391.10)">16363</text>
<text x="338.25" y="388.20" font-size="7.05" fill="#333" transform="translate(0,388.20) scale(1,1.07) translate(0,-388.20)">0 %</text>
<rect x="394.06" y="381.35" width="33.34" height="15.85" fill="#1a8ca9" rx="0.4"/>
<text x="410.73" y="391.85" font-size="7.25" fill="#fff" letter-spacing="0.05" text-anchor="middle" transform="translate(0,391.85) scale(1,1.07) translate(0,-391.85)">Delete</text>
<text x="432.50" y="388.20" font-size="7.05" fill="#333" textLength="11.9" lengthAdjust="spacingAndGlyphs" transform="translate(0,388.20) scale(1,1.07) translate(0,-388.20)">KES</text>
<text x="432.50" y="397.80" font-size="7.05" fill="#333" transform="translate(0,397.80) scale(1,1.07) translate(0,-397.80)">163,630</text>
<text x="472.00" y="388.20" font-size="7.05" fill="#333" transform="translate(0,388.20) scale(1,1.07) translate(0,-388.20)">0.29</text>
<text x="501.25" y="388.20" font-size="7.05" fill="#333" textLength="11.9" lengthAdjust="spacingAndGlyphs" transform="translate(0,388.20) scale(1,1.07) translate(0,-388.20)">KES</text>
<text x="501.25" y="397.80" font-size="7.05" fill="#333" transform="translate(0,397.80) scale(1,1.07) translate(0,-397.80)">564241.38</text>
<text x="550.75" y="388.20" font-size="7.05" fill="#333" transform="translate(0,388.20) scale(1,1.07) translate(0,-388.20)">1.01</text>
<text x="589.75" y="388.20" font-size="7.05" fill="#333" transform="translate(0,388.20) scale(1,1.07) translate(0,-388.20)">30,193,735</text>
<text x="630.50" y="388.20" font-size="7.05" fill="#333" transform="translate(0,388.20) scale(1,1.07) translate(0,-388.20)">86,070</text>
<text x="668.00" y="388.20" font-size="7.05" fill="#333" transform="translate(0,388.20) scale(1,1.07) translate(0,-388.20)">1.01</text>
<text x="708.00" y="388.20" font-size="7.05" fill="#333" transform="translate(0,388.20) scale(1,1.07) translate(0,-388.20)">0.71</text>
<text x="748.00" y="388.20" font-size="7.05" fill="#333" transform="translate(0,388.20) scale(1,1.07) translate(0,-388.20)">0.00</text>
<text x="788.00" y="388.20" font-size="7.05" fill="#333" transform="translate(0,388.20) scale(1,1.07) translate(0,-388.20)">0.00</text>
<text x="828.00" y="388.20" font-size="7.05" fill="#333" transform="translate(0,388.20) scale(1,1.07) translate(0,-388.20)">0.00</text>
<text x="868.00" y="388.20" font-size="7.05" fill="#333" transform="translate(0,388.20) scale(1,1.07) translate(0,-388.20)">0.00</text>
<text x="908.00" y="388.20" font-size="7.05" fill="#333" transform="translate(0,388.20) scale(1,1.07) translate(0,-388.20)">0.00</text>
<text x="948.00" y="388.20" font-size="7.05" fill="#333" transform="translate(0,388.20) scale(1,1.07) translate(0,-388.20)">0.00</text>
<text x="988.00" y="388.20" font-size="7.05" fill="#333" transform="translate(0,388.20) scale(1,1.07) translate(0,-388.20)">0.00</text>
<text x="27.75" y="412.12" font-size="7.05" fill="#333" textLength="36.8" lengthAdjust="spacingAndGlyphs" transform="translate(0,412.12) scale(1,1.07) translate(0,-412.12)">08/03/2020</text>
<text x="103.50" y="412.12" font-size="7.05" fill="#333" transform="translate(0,412.12) scale(1,1.07) translate(0,-412.12)">06:00-</text>
<text x="103.50" y="421.72" font-size="7.05" fill="#333" transform="translate(0,421.72) scale(1,1.07) translate(0,-421.72)">08:00</text>
<rect x="144.75" y="405.38" width="27.35" height="14.40" fill="#fff" stroke="#ccc" stroke-width="0.68" rx="1.8"/>
<text x="149.85" y="415.02" font-size="6.2" fill="#444" transform="translate(0,415.02) scale(1,1.07) translate(0,-415.02)">06:37:</text>
<text x="179.75" y="412.12" font-size="7.15" fill="#333" transform="translate(0,412.12) scale(1,1.07) translate(0,-412.12)">Ghetto Radio,</text>
<text x="179.75" y="421.72" font-size="7.15" fill="#333" transform="translate(0,421.72) scale(1,1.07) translate(0,-421.72)">89.5FM</text>
<rect x="235.40" y="405.38" width="35.00" height="14.40" fill="#fff" stroke="#ccc" stroke-width="0.68" rx="1.8"/>
<text x="240.60" y="415.02" font-size="6.2" fill="#444" transform="translate(0,415.02) scale(1,1.07) translate(0,-415.02)">30</text>
<text x="278.75" y="412.12" font-size="7.05" fill="#333" textLength="11.9" lengthAdjust="spacingAndGlyphs" transform="translate(0,412.12) scale(1,1.07) translate(0,-412.12)">KES</text>
<rect x="299.40" y="405.38" width="27.90" height="14.40" fill="#fff" stroke="#ccc" stroke-width="0.68" rx="1.8"/>
<text x="305.40" y="415.02" font-size="6.2" fill="#444" transform="translate(0,415.02) scale(1,1.07) translate(0,-415.02)">16363</text>
<text x="338.25" y="412.12" font-size="7.05" fill="#333" transform="translate(0,412.12) scale(1,1.07) translate(0,-412.12)">0 %</text>
<rect x="394.06" y="405.27" width="33.34" height="15.85" fill="#1a8ca9" rx="0.4"/>
<text x="410.73" y="415.77" font-size="7.25" fill="#fff" letter-spacing="0.05" text-anchor="middle" transform="translate(0,415.77) scale(1,1.07) translate(0,-415.77)">Delete</text>
<text x="432.50" y="412.12" font-size="7.05" fill="#333" textLength="11.9" lengthAdjust="spacingAndGlyphs" transform="translate(0,412.12) scale(1,1.07) translate(0,-412.12)">KES</text>
<text x="432.50" y="421.72" font-size="7.05" fill="#333" transform="translate(0,421.72) scale(1,1.07) translate(0,-421.72)">163,630</text>
<text x="472.00" y="412.12" font-size="7.05" fill="#333" transform="translate(0,412.12) scale(1,1.07) translate(0,-412.12)">0.29</text>
<text x="501.25" y="412.12" font-size="7.05" fill="#333" textLength="11.9" lengthAdjust="spacingAndGlyphs" transform="translate(0,412.12) scale(1,1.07) translate(0,-412.12)">KES</text>
<text x="501.25" y="421.72" font-size="7.05" fill="#333" transform="translate(0,421.72) scale(1,1.07) translate(0,-421.72)">564241.38</text>
<text x="550.75" y="412.12" font-size="7.05" fill="#333" transform="translate(0,412.12) scale(1,1.07) translate(0,-412.12)">1.01</text>
<text x="589.75" y="412.12" font-size="7.05" fill="#333" transform="translate(0,412.12) scale(1,1.07) translate(0,-412.12)">30,139,990</text>
<text x="630.50" y="412.12" font-size="7.05" fill="#333" transform="translate(0,412.12) scale(1,1.07) translate(0,-412.12)">85,917</text>
<text x="668.00" y="412.12" font-size="7.05" fill="#333" transform="translate(0,412.12) scale(1,1.07) translate(0,-412.12)">1.01</text>
<text x="708.00" y="412.12" font-size="7.05" fill="#333" transform="translate(0,412.12) scale(1,1.07) translate(0,-412.12)">1.01</text>
<text x="748.00" y="412.12" font-size="7.05" fill="#333" transform="translate(0,412.12) scale(1,1.07) translate(0,-412.12)">0.00</text>
<text x="788.00" y="412.12" font-size="7.05" fill="#333" transform="translate(0,412.12) scale(1,1.07) translate(0,-412.12)">0.00</text>
<text x="828.00" y="412.12" font-size="7.05" fill="#333" transform="translate(0,412.12) scale(1,1.07) translate(0,-412.12)">0.00</text>
<text x="868.00" y="412.12" font-size="7.05" fill="#333" transform="translate(0,412.12) scale(1,1.07) translate(0,-412.12)">0.00</text>
<text x="908.00" y="412.12" font-size="7.05" fill="#333" transform="translate(0,412.12) scale(1,1.07) translate(0,-412.12)">0.00</text>
<text x="948.00" y="412.12" font-size="7.05" fill="#333" transform="translate(0,412.12) scale(1,1.07) translate(0,-412.12)">0.00</text>
<text x="988.00" y="412.12" font-size="7.05" fill="#333" transform="translate(0,412.12) scale(1,1.07) translate(0,-412.12)">0.00</text>
<text x="27.75" y="436.05" font-size="7.05" fill="#333" textLength="36.8" lengthAdjust="spacingAndGlyphs" transform="translate(0,436.05) scale(1,1.07) translate(0,-436.05)">09/03/2020</text>
<text x="103.50" y="436.05" font-size="7.05" fill="#333" transform="translate(0,436.05) scale(1,1.07) translate(0,-436.05)">06:00-</text>
<text x="103.50" y="445.65" font-size="7.05" fill="#333" transform="translate(0,445.65) scale(1,1.07) translate(0,-445.65)">08:00</text>
<rect x="144.75" y="429.30" width="27.35" height="14.40" fill="#fff" stroke="#ccc" stroke-width="0.68" rx="1.8"/>
<text x="149.85" y="438.95" font-size="6.2" fill="#444" transform="translate(0,438.95) scale(1,1.07) translate(0,-438.95)">06:35:</text>
<text x="179.75" y="436.05" font-size="7.15" fill="#333" transform="translate(0,436.05) scale(1,1.07) translate(0,-436.05)">Ghetto Radio,</text>
<text x="179.75" y="445.65" font-size="7.15" fill="#333" transform="translate(0,445.65) scale(1,1.07) translate(0,-445.65)">89.5FM</text>
<rect x="235.40" y="429.30" width="35.00" height="14.40" fill="#fff" stroke="#ccc" stroke-width="0.68" rx="1.8"/>
<text x="240.60" y="438.95" font-size="6.2" fill="#444" transform="translate(0,438.95) scale(1,1.07) translate(0,-438.95)">30</text>
<text x="278.75" y="436.05" font-size="7.05" fill="#333" textLength="11.9" lengthAdjust="spacingAndGlyphs" transform="translate(0,436.05) scale(1,1.07) translate(0,-436.05)">KES</text>
<rect x="299.40" y="429.30" width="27.90" height="14.40" fill="#fff" stroke="#ccc" stroke-width="0.68" rx="1.8"/>
<text x="305.40" y="438.95" font-size="6.2" fill="#444" transform="translate(0,438.95) scale(1,1.07) translate(0,-438.95)">10699</text>
<text x="338.25" y="436.05" font-size="7.05" fill="#333" transform="translate(0,436.05) scale(1,1.07) translate(0,-436.05)">0 %</text>
<rect x="394.06" y="429.20" width="33.34" height="15.85" fill="#1a8ca9" rx="0.4"/>
<text x="410.73" y="439.70" font-size="7.25" fill="#fff" letter-spacing="0.05" text-anchor="middle" transform="translate(0,439.70) scale(1,1.07) translate(0,-439.70)">Delete</text>
<text x="432.50" y="436.05" font-size="7.05" fill="#333" textLength="11.9" lengthAdjust="spacingAndGlyphs" transform="translate(0,436.05) scale(1,1.07) translate(0,-436.05)">KES</text>
<text x="432.50" y="445.65" font-size="7.05" fill="#333" transform="translate(0,445.65) scale(1,1.07) translate(0,-445.65)">106,990</text>
<text x="472.00" y="436.05" font-size="7.05" fill="#333" transform="translate(0,436.05) scale(1,1.07) translate(0,-436.05)">0.03</text>
<text x="501.25" y="436.05" font-size="7.05" fill="#333" textLength="11.9" lengthAdjust="spacingAndGlyphs" transform="translate(0,436.05) scale(1,1.07) translate(0,-436.05)">KES</text>
<text x="501.25" y="445.65" font-size="7.05" fill="#333" transform="translate(0,445.65) scale(1,1.07) translate(0,-445.65)">3566333.33</text>
<text x="550.75" y="436.05" font-size="7.05" fill="#333" transform="translate(0,436.05) scale(1,1.07) translate(0,-436.05)">1.01</text>
<text x="589.75" y="436.05" font-size="7.05" fill="#333" transform="translate(0,436.05) scale(1,1.07) translate(0,-436.05)">30,193,735</text>
<text x="630.50" y="436.05" font-size="7.05" fill="#333" transform="translate(0,436.05) scale(1,1.07) translate(0,-436.05)">9,617</text>
<text x="668.00" y="436.05" font-size="7.05" fill="#333" transform="translate(0,436.05) scale(1,1.07) translate(0,-436.05)">1.11</text>
<text x="708.00" y="436.05" font-size="7.05" fill="#333" transform="translate(0,436.05) scale(1,1.07) translate(0,-436.05)">1.01</text>
<text x="748.00" y="436.05" font-size="7.05" fill="#333" transform="translate(0,436.05) scale(1,1.07) translate(0,-436.05)">0.00</text>
<text x="788.00" y="436.05" font-size="7.05" fill="#333" transform="translate(0,436.05) scale(1,1.07) translate(0,-436.05)">0.00</text>
<text x="828.00" y="436.05" font-size="7.05" fill="#333" transform="translate(0,436.05) scale(1,1.07) translate(0,-436.05)">0.00</text>
<text x="868.00" y="436.05" font-size="7.05" fill="#333" transform="translate(0,436.05) scale(1,1.07) translate(0,-436.05)">0.00</text>
<text x="908.00" y="436.05" font-size="7.05" fill="#333" transform="translate(0,436.05) scale(1,1.07) translate(0,-436.05)">0.00</text>
<text x="948.00" y="436.05" font-size="7.05" fill="#333" transform="translate(0,436.05) scale(1,1.07) translate(0,-436.05)">0.00</text>
<text x="988.00" y="436.05" font-size="7.05" fill="#333" transform="translate(0,436.05) scale(1,1.07) translate(0,-436.05)">0.00</text>
<text x="27.75" y="459.98" font-size="7.05" fill="#333" textLength="36.8" lengthAdjust="spacingAndGlyphs" transform="translate(0,459.98) scale(1,1.07) translate(0,-459.98)">09/03/2020</text>
<text x="103.50" y="459.98" font-size="7.05" fill="#333" transform="translate(0,459.98) scale(1,1.07) translate(0,-459.98)">06:00-</text>
<text x="103.50" y="469.57" font-size="7.05" fill="#333" transform="translate(0,469.57) scale(1,1.07) translate(0,-469.57)">08:00</text>
<rect x="144.75" y="453.23" width="27.35" height="14.40" fill="#fff" stroke="#ccc" stroke-width="0.68" rx="1.8"/>
<text x="149.85" y="462.88" font-size="6.2" fill="#444" transform="translate(0,462.88) scale(1,1.07) translate(0,-462.88)">06:35:</text>
<text x="179.75" y="459.98" font-size="7.15" fill="#333" transform="translate(0,459.98) scale(1,1.07) translate(0,-459.98)">Ghetto Radio,</text>
<text x="179.75" y="469.57" font-size="7.15" fill="#333" transform="translate(0,469.57) scale(1,1.07) translate(0,-469.57)">89.5FM</text>
<rect x="235.40" y="453.23" width="35.00" height="14.40" fill="#fff" stroke="#ccc" stroke-width="0.68" rx="1.8"/>
<text x="240.60" y="462.88" font-size="6.2" fill="#444" transform="translate(0,462.88) scale(1,1.07) translate(0,-462.88)">30</text>
<text x="278.75" y="459.98" font-size="7.05" fill="#333" textLength="11.9" lengthAdjust="spacingAndGlyphs" transform="translate(0,459.98) scale(1,1.07) translate(0,-459.98)">KES</text>
<rect x="299.40" y="453.23" width="27.90" height="14.40" fill="#fff" stroke="#ccc" stroke-width="0.68" rx="1.8"/>
<text x="305.40" y="462.88" font-size="6.2" fill="#444" transform="translate(0,462.88) scale(1,1.07) translate(0,-462.88)">10699</text>
<text x="338.25" y="459.98" font-size="7.05" fill="#333" transform="translate(0,459.98) scale(1,1.07) translate(0,-459.98)">0 %</text>
<rect x="394.06" y="453.12" width="33.34" height="15.85" fill="#1a8ca9" rx="0.4"/>
<text x="410.73" y="463.62" font-size="7.25" fill="#fff" letter-spacing="0.05" text-anchor="middle" transform="translate(0,463.62) scale(1,1.07) translate(0,-463.62)">Delete</text>
<text x="432.50" y="459.98" font-size="7.05" fill="#333" textLength="11.9" lengthAdjust="spacingAndGlyphs" transform="translate(0,459.98) scale(1,1.07) translate(0,-459.98)">KES</text>
<text x="432.50" y="469.57" font-size="7.05" fill="#333" transform="translate(0,469.57) scale(1,1.07) translate(0,-469.57)">106,990</text>
<text x="472.00" y="459.98" font-size="7.05" fill="#333" transform="translate(0,459.98) scale(1,1.07) translate(0,-459.98)">0.03</text>
<text x="501.25" y="459.98" font-size="7.05" fill="#333" textLength="11.9" lengthAdjust="spacingAndGlyphs" transform="translate(0,459.98) scale(1,1.07) translate(0,-459.98)">KES</text>
<text x="501.25" y="469.57" font-size="7.05" fill="#333" transform="translate(0,469.57) scale(1,1.07) translate(0,-469.57)">3566333.33</text>
<text x="550.75" y="459.98" font-size="7.05" fill="#333" transform="translate(0,459.98) scale(1,1.07) translate(0,-459.98)">1.01</text>
<text x="589.75" y="459.98" font-size="7.05" fill="#333" transform="translate(0,459.98) scale(1,1.07) translate(0,-459.98)">30,139,990</text>
<text x="630.50" y="459.98" font-size="7.05" fill="#333" transform="translate(0,459.98) scale(1,1.07) translate(0,-459.98)">9,600</text>
<text x="668.00" y="459.98" font-size="7.05" fill="#333" transform="translate(0,459.98) scale(1,1.07) translate(0,-459.98)">1.11</text>
<text x="708.00" y="459.98" font-size="7.05" fill="#333" transform="translate(0,459.98) scale(1,1.07) translate(0,-459.98)">1.11</text>
<text x="748.00" y="459.98" font-size="7.05" fill="#333" transform="translate(0,459.98) scale(1,1.07) translate(0,-459.98)">0.00</text>
<text x="788.00" y="459.98" font-size="7.05" fill="#333" transform="translate(0,459.98) scale(1,1.07) translate(0,-459.98)">0.00</text>
<text x="828.00" y="459.98" font-size="7.05" fill="#333" transform="translate(0,459.98) scale(1,1.07) translate(0,-459.98)">0.00</text>
<text x="868.00" y="459.98" font-size="7.05" fill="#333" transform="translate(0,459.98) scale(1,1.07) translate(0,-459.98)">0.00</text>
<text x="908.00" y="459.98" font-size="7.05" fill="#333" transform="translate(0,459.98) scale(1,1.07) translate(0,-459.98)">0.00</text>
<text x="948.00" y="459.98" font-size="7.05" fill="#333" transform="translate(0,459.98) scale(1,1.07) translate(0,-459.98)">0.00</text>
<text x="988.00" y="459.98" font-size="7.05" fill="#333" transform="translate(0,459.98) scale(1,1.07) translate(0,-459.98)">0.00</text>
<text x="27.75" y="483.90" font-size="7.05" fill="#333" textLength="36.8" lengthAdjust="spacingAndGlyphs" transform="translate(0,483.90) scale(1,1.07) translate(0,-483.90)">10/03/2020</text>
<text x="103.50" y="483.90" font-size="7.05" fill="#333" transform="translate(0,483.90) scale(1,1.07) translate(0,-483.90)">08:00-</text>
<text x="103.50" y="493.50" font-size="7.05" fill="#333" transform="translate(0,493.50) scale(1,1.07) translate(0,-493.50)">10:00</text>
<rect x="144.75" y="477.15" width="27.35" height="14.40" fill="#fff" stroke="#ccc" stroke-width="0.68" rx="1.8"/>
<text x="149.85" y="486.80" font-size="6.2" fill="#444" transform="translate(0,486.80) scale(1,1.07) translate(0,-486.80)">09:47:</text>
<text x="179.75" y="483.90" font-size="7.15" fill="#333" transform="translate(0,483.90) scale(1,1.07) translate(0,-483.90)">Ghetto Radio,</text>
<text x="179.75" y="493.50" font-size="7.15" fill="#333" transform="translate(0,493.50) scale(1,1.07) translate(0,-493.50)">89.5FM</text>
<rect x="235.40" y="477.15" width="35.00" height="14.40" fill="#fff" stroke="#ccc" stroke-width="0.68" rx="1.8"/>
<text x="240.60" y="486.80" font-size="6.2" fill="#444" transform="translate(0,486.80) scale(1,1.07) translate(0,-486.80)">30</text>
<text x="278.75" y="483.90" font-size="7.05" fill="#333" textLength="11.9" lengthAdjust="spacingAndGlyphs" transform="translate(0,483.90) scale(1,1.07) translate(0,-483.90)">KES</text>
<rect x="299.40" y="477.15" width="27.90" height="14.40" fill="#fff" stroke="#ccc" stroke-width="0.68" rx="1.8"/>
<text x="305.40" y="486.80" font-size="6.2" fill="#444" transform="translate(0,486.80) scale(1,1.07) translate(0,-486.80)">16363</text>
<text x="338.25" y="483.90" font-size="7.05" fill="#333" transform="translate(0,483.90) scale(1,1.07) translate(0,-483.90)">0 %</text>
<rect x="394.06" y="477.05" width="33.34" height="15.85" fill="#1a8ca9" rx="0.4"/>
<text x="410.73" y="487.55" font-size="7.25" fill="#fff" letter-spacing="0.05" text-anchor="middle" transform="translate(0,487.55) scale(1,1.07) translate(0,-487.55)">Delete</text>
<text x="432.50" y="483.90" font-size="7.05" fill="#333" textLength="11.9" lengthAdjust="spacingAndGlyphs" transform="translate(0,483.90) scale(1,1.07) translate(0,-483.90)">KES</text>
<text x="432.50" y="493.50" font-size="7.05" fill="#333" transform="translate(0,493.50) scale(1,1.07) translate(0,-493.50)">163,630</text>
<text x="472.00" y="483.90" font-size="7.05" fill="#333" transform="translate(0,483.90) scale(1,1.07) translate(0,-483.90)">0.26</text>
<text x="501.25" y="483.90" font-size="7.05" fill="#333" textLength="11.9" lengthAdjust="spacingAndGlyphs" transform="translate(0,483.90) scale(1,1.07) translate(0,-483.90)">KES</text>
<text x="501.25" y="493.50" font-size="7.05" fill="#333" transform="translate(0,493.50) scale(1,1.07) translate(0,-493.50)">629346.15</text>
<text x="550.75" y="483.90" font-size="7.05" fill="#333" transform="translate(0,483.90) scale(1,1.07) translate(0,-483.90)">1.01</text>
<text x="589.75" y="483.90" font-size="7.05" fill="#333" transform="translate(0,483.90) scale(1,1.07) translate(0,-483.90)">30,193,735</text>
<text x="630.50" y="483.90" font-size="7.05" fill="#333" transform="translate(0,483.90) scale(1,1.07) translate(0,-483.90)">78,150</text>
<text x="668.00" y="483.90" font-size="7.05" fill="#333" transform="translate(0,483.90) scale(1,1.07) translate(0,-483.90)">1.42</text>
<text x="708.00" y="483.90" font-size="7.05" fill="#333" transform="translate(0,483.90) scale(1,1.07) translate(0,-483.90)">1.11</text>
<text x="748.00" y="483.90" font-size="7.05" fill="#333" transform="translate(0,483.90) scale(1,1.07) translate(0,-483.90)">0.00</text>
<text x="788.00" y="483.90" font-size="7.05" fill="#333" transform="translate(0,483.90) scale(1,1.07) translate(0,-483.90)">0.00</text>
<text x="828.00" y="483.90" font-size="7.05" fill="#333" transform="translate(0,483.90) scale(1,1.07) translate(0,-483.90)">0.00</text>
<text x="868.00" y="483.90" font-size="7.05" fill="#333" transform="translate(0,483.90) scale(1,1.07) translate(0,-483.90)">0.00</text>
<text x="908.00" y="483.90" font-size="7.05" fill="#333" transform="translate(0,483.90) scale(1,1.07) translate(0,-483.90)">0.00</text>
<text x="948.00" y="483.90" font-size="7.05" fill="#333" transform="translate(0,483.90) scale(1,1.07) translate(0,-483.90)">0.00</text>
<text x="988.00" y="483.90" font-size="7.05" fill="#333" transform="translate(0,483.90) scale(1,1.07) translate(0,-483.90)">0.00</text>
<text x="27.75" y="507.83" font-size="7.05" fill="#333" textLength="36.8" lengthAdjust="spacingAndGlyphs" transform="translate(0,507.83) scale(1,1.07) translate(0,-507.83)">10/03/2020</text>
<text x="103.50" y="507.83" font-size="7.05" fill="#333" transform="translate(0,507.83) scale(1,1.07) translate(0,-507.83)">08:00-</text>
<text x="103.50" y="517.43" font-size="7.05" fill="#333" transform="translate(0,517.43) scale(1,1.07) translate(0,-517.43)">10:00</text>
<rect x="144.75" y="501.08" width="27.35" height="14.40" fill="#fff" stroke="#ccc" stroke-width="0.68" rx="1.8"/>
<text x="149.85" y="510.73" font-size="6.2" fill="#444" transform="translate(0,510.73) scale(1,1.07) translate(0,-510.73)">09:47:</text>
<text x="179.75" y="507.83" font-size="7.15" fill="#333" transform="translate(0,507.83) scale(1,1.07) translate(0,-507.83)">Ghetto Radio,</text>
<text x="179.75" y="517.43" font-size="7.15" fill="#333" transform="translate(0,517.43) scale(1,1.07) translate(0,-517.43)">89.5FM</text>
<rect x="235.40" y="501.08" width="35.00" height="14.40" fill="#fff" stroke="#ccc" stroke-width="0.68" rx="1.8"/>
<text x="240.60" y="510.73" font-size="6.2" fill="#444" transform="translate(0,510.73) scale(1,1.07) translate(0,-510.73)">30</text>
<text x="278.75" y="507.83" font-size="7.05" fill="#333" textLength="11.9" lengthAdjust="spacingAndGlyphs" transform="translate(0,507.83) scale(1,1.07) translate(0,-507.83)">KES</text>
<rect x="299.40" y="501.08" width="27.90" height="14.40" fill="#fff" stroke="#ccc" stroke-width="0.68" rx="1.8"/>
<text x="305.40" y="510.73" font-size="6.2" fill="#444" transform="translate(0,510.73) scale(1,1.07) translate(0,-510.73)">16363</text>
<text x="338.25" y="507.83" font-size="7.05" fill="#333" transform="translate(0,507.83) scale(1,1.07) translate(0,-507.83)">0 %</text>
<rect x="394.06" y="500.98" width="33.34" height="15.85" fill="#1a8ca9" rx="0.4"/>
<text x="410.73" y="511.48" font-size="7.25" fill="#fff" letter-spacing="0.05" text-anchor="middle" transform="translate(0,511.48) scale(1,1.07) translate(0,-511.48)">Delete</text>
<text x="432.50" y="507.83" font-size="7.05" fill="#333" textLength="11.9" lengthAdjust="spacingAndGlyphs" transform="translate(0,507.83) scale(1,1.07) translate(0,-507.83)">KES</text>
<text x="432.50" y="517.43" font-size="7.05" fill="#333" transform="translate(0,517.43) scale(1,1.07) translate(0,-517.43)">163,630</text>
<text x="472.00" y="507.83" font-size="7.05" fill="#333" transform="translate(0,507.83) scale(1,1.07) translate(0,-507.83)">0.26</text>
<text x="501.25" y="507.83" font-size="7.05" fill="#333" textLength="11.9" lengthAdjust="spacingAndGlyphs" transform="translate(0,507.83) scale(1,1.07) translate(0,-507.83)">KES</text>
<text x="501.25" y="517.43" font-size="7.05" fill="#333" transform="translate(0,517.43) scale(1,1.07) translate(0,-517.43)">629346.15</text>
<text x="550.75" y="507.83" font-size="7.05" fill="#333" transform="translate(0,507.83) scale(1,1.07) translate(0,-507.83)">1.01</text>
<text x="589.75" y="507.83" font-size="7.05" fill="#333" transform="translate(0,507.83) scale(1,1.07) translate(0,-507.83)">30,139,990</text>
<text x="630.50" y="507.83" font-size="7.05" fill="#333" transform="translate(0,507.83) scale(1,1.07) translate(0,-507.83)">78,010</text>
<text x="668.00" y="507.83" font-size="7.05" fill="#333" transform="translate(0,507.83) scale(1,1.07) translate(0,-507.83)">1.42</text>
<text x="708.00" y="507.83" font-size="7.05" fill="#333" transform="translate(0,507.83) scale(1,1.07) translate(0,-507.83)">1.42</text>
<text x="748.00" y="507.83" font-size="7.05" fill="#333" transform="translate(0,507.83) scale(1,1.07) translate(0,-507.83)">0.00</text>
<text x="788.00" y="507.83" font-size="7.05" fill="#333" transform="translate(0,507.83) scale(1,1.07) translate(0,-507.83)">0.00</text>
<text x="828.00" y="507.83" font-size="7.05" fill="#333" transform="translate(0,507.83) scale(1,1.07) translate(0,-507.83)">0.00</text>
<text x="868.00" y="507.83" font-size="7.05" fill="#333" transform="translate(0,507.83) scale(1,1.07) translate(0,-507.83)">0.00</text>
<text x="908.00" y="507.83" font-size="7.05" fill="#333" transform="translate(0,507.83) scale(1,1.07) translate(0,-507.83)">0.00</text>
<text x="948.00" y="507.83" font-size="7.05" fill="#333" transform="translate(0,507.83) scale(1,1.07) translate(0,-507.83)">0.00</text>
<text x="988.00" y="507.83" font-size="7.05" fill="#333" transform="translate(0,507.83) scale(1,1.07) translate(0,-507.83)">0.00</text>
</svg>

</div></body></html>
